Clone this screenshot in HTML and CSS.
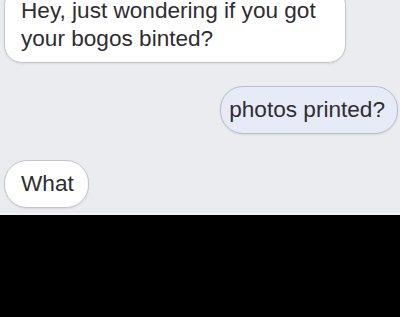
FILE: index.html
```html
<!DOCTYPE html>
<html lang="en">
<head>
<meta charset="utf-8">
<title>Messages</title>
<link rel="stylesheet" href="styles.css">
</head>
<body>
<div class="chat">
  <div class="bubble received first">Hey, just wondering if you got your bogos binted?</div>
  <div class="bubble sent">photos printed?</div>
  <div class="bubble received">What</div>
</div>
<div class="bottom-line"></div>
</body>
</html>
```
FILE: styles.css
```css
html, body {
  margin: 0;
  padding: 0;
  background: #000;
  height: 100%;
}
.chat {
  height: 213px;
  overflow: hidden;
  background: #eaecf0;
  display: flex;
  flex-direction: column;
  align-items: flex-start;
  padding: 0 2px 0 4px;
  box-sizing: border-box;
  font-family: "Liberation Sans", Arial, sans-serif;
  font-size: 22.6px;
  line-height: 28px;
  color: #2e2e30;
}
.bottom-line {
  height: 2px;
  background: #f3f3f5;
}
.bubble {
  border: 1px solid #c4c6cc;
  border-radius: 23px;
  padding: 9px 14px 9px 16px;
  background: #ffffff;
  box-shadow: 0 1px 2px rgba(0, 0, 0, 0.08);
}
.first {
  margin-top: -13px;
  max-width: 342px;
  box-sizing: border-box;
  border-radius: 18px;
}
.sent {
  align-self: flex-end;
  margin-top: 23px;
  padding: 9px 12px 9px 8px;
  background: #e7ebf7;
  border-color: #b9bdc9;
}
.sent + .received {
  margin-top: 26px;
}
```
